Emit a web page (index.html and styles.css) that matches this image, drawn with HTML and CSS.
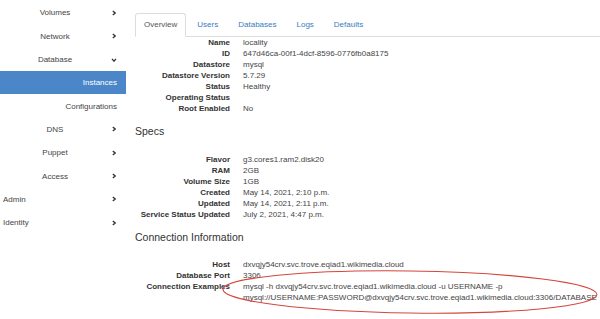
FILE: index.html
```html
<!DOCTYPE html>
<html lang="en">
<head>
  <meta charset="UTF-8">
  <title>Instance details</title>
  <link rel="stylesheet" href="styles.css">
</head>
<body>

  <!-- Sidebar -->
  <nav class="sidebar">
    <div class="nav-item group"><span class="nav-label">Volumes</span><svg class="chev" viewBox="0 0 5 7"><polyline points="1,1 4,3.5 1,6"/></svg></div>
    <div class="nav-item group"><span class="nav-label">Network</span><svg class="chev" viewBox="0 0 5 7"><polyline points="1,1 4,3.5 1,6"/></svg></div>
    <div class="nav-item group"><span class="nav-label">Database</span><svg class="chev down" viewBox="0 0 7 5"><polyline points="1,1 3.5,4 6,1"/></svg></div>
    <div class="nav-item sub active"><span class="nav-label">Instances</span></div>
    <div class="nav-item sub"><span class="nav-label">Configurations</span></div>
    <div class="nav-item group"><span class="nav-label">DNS</span><svg class="chev" viewBox="0 0 5 7"><polyline points="1,1 4,3.5 1,6"/></svg></div>
    <div class="nav-item group"><span class="nav-label">Puppet</span><svg class="chev" viewBox="0 0 5 7"><polyline points="1,1 4,3.5 1,6"/></svg></div>
    <div class="nav-item group"><span class="nav-label">Access</span><svg class="chev" viewBox="0 0 5 7"><polyline points="1,1 4,3.5 1,6"/></svg></div>
    <div class="nav-item top"><span class="nav-label">Admin</span><svg class="chev" viewBox="0 0 5 7"><polyline points="1,1 4,3.5 1,6"/></svg></div>
    <div class="nav-item top"><span class="nav-label">Identity</span><svg class="chev" viewBox="0 0 5 7"><polyline points="1,1 4,3.5 1,6"/></svg></div>
  </nav>

  <!-- Main content -->
  <main class="main">
    <ul class="tabs">
      <li class="tab active">Overview</li>
      <li class="tab">Users</li>
      <li class="tab">Databases</li>
      <li class="tab">Logs</li>
      <li class="tab">Defaults</li>
    </ul>

    <dl class="details">
      <dt>Name</dt><dd>locality</dd>
      <dt>ID</dt><dd>647d46ca-00f1-4dcf-8596-0776fb0a8175</dd>
      <dt>Datastore</dt><dd>mysql</dd>
      <dt>Datastore Version</dt><dd>5.7.29</dd>
      <dt>Status</dt><dd>Healthy</dd>
      <dt>Operating Status</dt><dd></dd>
      <dt>Root Enabled</dt><dd>No</dd>
    </dl>

    <h3 class="section-title">Specs</h3>
    <dl class="details">
      <dt>Flavor</dt><dd>g3.cores1.ram2.disk20</dd>
      <dt>RAM</dt><dd>2GB</dd>
      <dt>Volume Size</dt><dd>1GB</dd>
      <dt>Created</dt><dd>May 14, 2021, 2:10 p.m.</dd>
      <dt>Updated</dt><dd>May 14, 2021, 2:11 p.m.</dd>
      <dt>Service Status Updated</dt><dd>July 2, 2021, 4:47 p.m.</dd>
    </dl>

    <h3 class="section-title">Connection Information</h3>
    <dl class="details">
      <dt>Host</dt><dd>dxvqjy54crv.svc.trove.eqiad1.wikimedia.cloud</dd>
      <dt>Database Port</dt><dd>3306</dd>
      <dt>Connection Examples</dt>
      <dd>mysql -h dxvqjy54crv.svc.trove.eqiad1.wikimedia.cloud -u USERNAME -p<br>mysql://USERNAME:PASSWORD@dxvqjy54crv.svc.trove.eqiad1.wikimedia.cloud:3306/DATABASE</dd>
    </dl>
  </main>

  <!-- Hand-drawn highlight around the connection examples -->
  <svg class="annotation" viewBox="0 0 600 319">
    <ellipse cx="410" cy="292" rx="187" ry="21" transform="rotate(0.8 410 292)"/>
  </svg>

</body>
</html>
```

FILE: styles.css
```css
/* Global */
body {
  font-family: 'Liberation Sans', Arial, sans-serif;
  font-size: 8px;
  margin: 0;
  padding: 0;
  background-color: #fff;
  color: #333;
  display: flex;
  width: 600px;
  height: 319px;
  overflow: hidden;
  position: relative;
}

/* Sidebar */
.sidebar {
  width: 126px;
  flex-shrink: 0;
  padding-top: 1.3px;
}

.nav-item {
  height: 23.3px;
  display: grid;
  grid-template-columns: 110px 16px;
  align-items: center;
  color: #444;
}

.nav-item.group .nav-label {
  text-align: center;
}

.nav-item.top .nav-label {
  padding-left: 3px;
}

.nav-item.sub {
  grid-template-columns: 1fr;
}

.nav-item.sub .nav-label {
  text-align: right;
  padding-right: 9px;
}

.nav-item.active {
  background-color: #4a86c8;
  color: #fff;
}

.chev {
  width: 4px;
  height: 6px;
  margin-left: 1.5px;
  fill: none;
  stroke: #333;
  stroke-width: 1.6;
}

.chev.down {
  width: 6px;
  height: 4px;
  margin-left: 1px;
}

/* Main */
.main {
  flex: 1;
  padding-left: 9px;
  white-space: nowrap;
}

.tabs {
  list-style: none;
  margin: 13px 0 0;
  padding: 0;
  display: flex;
  border-bottom: 1px solid #ddd;
}

.tab {
  line-height: 22px;
  padding: 0 8px;
  margin-right: 2px;
  margin-bottom: -1px;
  border: 1px solid transparent;
  border-radius: 3px 3px 0 0;
  color: #3a7bc0;
}

.tab.active {
  color: #555;
  background-color: #fff;
  border-color: #ddd #ddd transparent;
}

.details {
  display: grid;
  grid-template-columns: 95px 1fr;
  column-gap: 13px;
  margin: 0;
  line-height: 11px;
}

.details dt {
  font-weight: bold;
  text-align: right;
  color: #333;
}

.details dd {
  margin: 0;
  color: #444;
  min-height: 11px;
}

.section-title {
  font-size: 10.5px;
  font-weight: normal;
  line-height: 14px;
  margin: 10px 0 15.5px;
  color: #333;
}

/* Annotation */
.annotation {
  position: absolute;
  top: 0;
  left: 0;
  width: 600px;
  height: 319px;
  pointer-events: none;
  fill: none;
  stroke: #d4463c;
  stroke-width: 1.1;
}
```
